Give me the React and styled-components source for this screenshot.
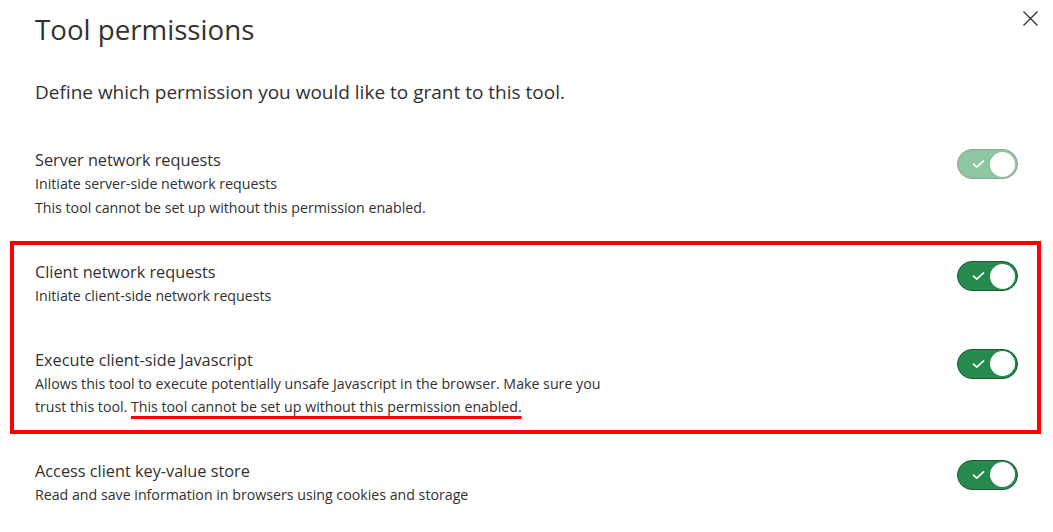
import React from "react";
import styled, { createGlobalStyle } from "styled-components";

const Global = createGlobalStyle`
  html, body { margin: 0; padding: 0; background: #ffffff; }
  body { font-family: "Open Sans", "Noto Sans", sans-serif; }
`;

const Dialog = styled.div`
  width: 1053px;
  height: 532px;
  box-sizing: border-box;
  padding: 11px 35px 0 35px;
  overflow: hidden;
  background: #fff;
  position: relative;
`;

const Header = styled.div`
  display: flex;
  justify-content: space-between;
  align-items: flex-start;
`;

const Title = styled.h1`
  margin: 0;
  font-size: 27.7px;
  line-height: 36px;
  font-weight: 400;
  color: #323130;
`;

const CloseButton = styled.button`
  border: 0;
  background: none;
  padding: 0;
  margin: 0 -20px 0 0;
  width: 15px;
  height: 15px;
  display: flex;
  cursor: pointer;
`;

const Intro = styled.p`
  margin: 31px 0 0 0;
  font-size: 19px;
  line-height: 28px;
  color: #323130;
`;

const List = styled.div`
  display: flex;
  flex-direction: column;
  margin-top: 42px;
`;

const Highlight = styled.div`
  display: flex;
  flex-direction: column;
  gap: 40px;
  margin: 22px -23px 25px -25px;
  padding: 15px 19px 11px 21px;
  border: 4px solid #ff0000;
`;

const Row = styled.div`
  display: flex;
  justify-content: space-between;
  align-items: flex-start;
`;

const Texts = styled.div`
  display: flex;
  flex-direction: column;
  max-width: 578px;
`;

const RowTitle = styled.div`
  font-size: 16.3px;
  line-height: 24px;
  color: #323130;
`;

const RowDesc = styled.div`
  font-size: 14.2px;
  line-height: 23.5px;
  color: #323130;
`;

const Marked = styled.span`
  text-decoration: underline;
  text-decoration-color: #ff0000;
  text-decoration-thickness: 3px;
  text-underline-offset: 4px;
  text-decoration-skip-ink: none;
`;

const Track = styled.div`
  width: 61px;
  height: 30px;
  box-sizing: border-box;
  margin-top: 1px;
  border-radius: 15px;
  border: 1px solid ${(p) => (p.$disabled ? "#8aa696" : "#1c5a35")};
  background: ${(p) => (p.$disabled ? "#8fc6a2" : "#268a4e")};
  display: flex;
  align-items: center;
  justify-content: space-between;
  padding: 0 2px 0 14px;
  flex-shrink: 0;
`;

const Knob = styled.div`
  width: 25px;
  height: 25px;
  border-radius: 50%;
  background: #ffffff;
`;

function Toggle({ disabled }) {
  return (
    <Track $disabled={disabled}>
      <svg width="13" height="10" viewBox="0 0 13 10">
        <path d="M1.5 5.2 L4.8 8.2 L11.5 1.8" fill="none" stroke="#ffffff" strokeWidth="1.7" strokeLinecap="round" strokeLinejoin="round" />
      </svg>
      <Knob />
    </Track>
  );
}

function Permission({ title, children, disabled }) {
  return (
    <Row>
      <Texts>
        <RowTitle>{title}</RowTitle>
        {children}
      </Texts>
      <Toggle disabled={disabled} />
    </Row>
  );
}

export default function App() {
  return (
    <>
      <Global />
      <Dialog>
        <Header>
          <Title>Tool permissions</Title>
          <CloseButton aria-label="Close">
            <svg width="15" height="15" viewBox="0 0 15 15">
              <path d="M0.5 0.5 L14.5 14.5 M14.5 0.5 L0.5 14.5" stroke="#323130" strokeWidth="1.3" fill="none" />
            </svg>
          </CloseButton>
        </Header>
        <Intro>Define which permission you would like to grant to this tool.</Intro>
        <List>
          <Permission title="Server network requests" disabled>
            <RowDesc>Initiate server-side network requests</RowDesc>
            <RowDesc>This tool cannot be set up without this permission enabled.</RowDesc>
          </Permission>
          <Highlight>
            <Permission title="Client network requests">
              <RowDesc>Initiate client-side network requests</RowDesc>
            </Permission>
            <Permission title="Execute client-side Javascript">
              <RowDesc>
                Allows this tool to execute potentially unsafe Javascript in the browser. Make sure you trust this tool.{" "}
                <Marked>This tool cannot be set up without this permission enabled.</Marked>
              </RowDesc>
            </Permission>
          </Highlight>
          <Permission title="Access client key-value store">
            <RowDesc>Read and save information in browsers using cookies and storage</RowDesc>
          </Permission>
        </List>
      </Dialog>
    </>
  );
}
